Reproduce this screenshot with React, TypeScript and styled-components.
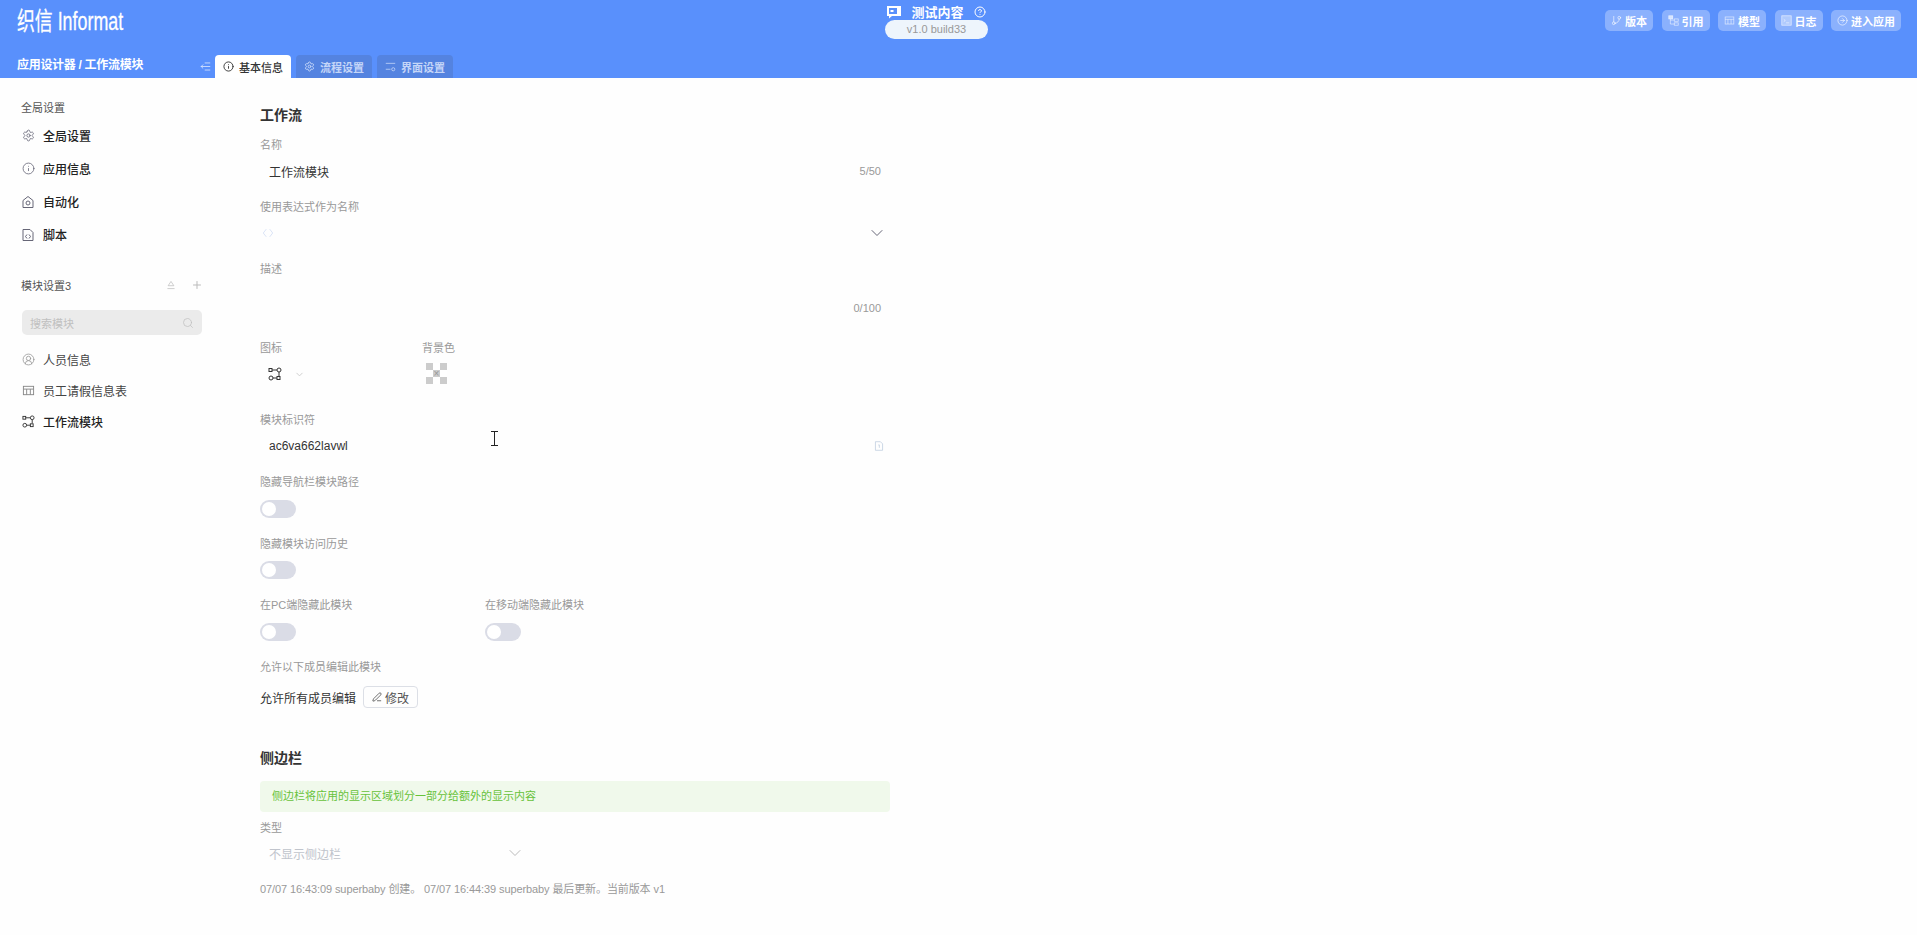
import React from 'react';
import styled, { createGlobalStyle } from 'styled-components';
import { ChevronDown, CircleArrowRight, CircleHelp, CircleUserRound, GitBranch, Info, PenLine, Plus, Search, Settings } from 'lucide-react';

const FONT = `"Liberation Sans", "Noto Sans CJK SC", sans-serif`;

const GlobalStyle = createGlobalStyle`
  html, body { margin: 0; padding: 0; height: 100%; }
  body { background: #fefefe; font-family: ${FONT}; overflow: hidden; }
  * { box-sizing: border-box; }
`;

const Page = styled.div`
  width: 1917px;
  height: 935px;
  display: flex;
  flex-direction: column;
`;

const Header = styled.header`
  height: 78px;
  flex: none;
  background: #5990fc;
  display: flex;
  flex-direction: column;
  position: relative;
`;

const TopRow = styled.div`
  height: 55px;
  display: flex;
  justify-content: space-between;
  padding: 10px 16px 0 17px;
`;

const Logo = styled.div`
  color: #fff;
  font-size: 25px;
  line-height: 22px;
  -webkit-text-stroke: 0.3px #fff;
  transform: scaleX(0.714);
  transform-origin: left center;
  white-space: nowrap;
`;

const Center = styled.div`
  position: absolute;
  left: 885px;
  top: 3px;
  width: 103px;
  display: flex;
  flex-direction: column;
  align-items: center;
`;

const TitleRow = styled.div`
  height: 17px;
  display: flex;
  align-items: center;
  gap: 10px;
  color: #fff;
  font-size: 13px;
  font-weight: 700;
  white-space: nowrap;
`;

const Version = styled.div`
  width: 103px;
  height: 19px;
  border-radius: 10px;
  background: #eef5fc;
  color: #999;
  font-size: 11px;
  line-height: 19px;
  text-align: center;
`;

const Actions = styled.div`
  display: flex;
  gap: 8.5px;
`;

const ActionButton = styled.div`
  height: 21px;
  padding: 0 6px;
  border-radius: 5px;
  background: rgba(255, 255, 255, 0.3);
  color: #fff;
  font-size: 11px;
  font-weight: 700;
  display: flex;
  align-items: center;
  gap: 3px;
  white-space: nowrap;
  svg {
    color: rgba(255, 255, 255, 0.65);
  }
`;

const BottomRow = styled.div`
  height: 23px;
  display: flex;
  align-items: flex-end;
  padding-left: 17px;
`;

const Crumb = styled.div`
  width: 183px;
  height: 23px;
  color: #fff;
  font-size: 12px;
  font-weight: 700;
  line-height: 20px;
  letter-spacing: -0.3px;
  white-space: nowrap;
`;

const Collapse = styled.div`
  width: 15px;
  height: 23px;
  display: flex;
  align-items: center;
  color: #dfe9fe;
`;

const Tabs = styled.div`
  display: flex;
  gap: 5px;
`;

const Tab = styled.div<{ $active?: boolean }>`
  width: 76px;
  height: 23px;
  border-radius: 4px 4px 0 0;
  background: ${({ $active }) => ($active ? '#fff' : '#5483e0')};
  color: ${({ $active }) => ($active ? '#333' : '#c5d6f8')};
  font-size: 11px;
  font-weight: ${({ $active }) => ($active ? 500 : 700)};
  display: flex;
  align-items: center;
  justify-content: center;
  gap: 5px;
  white-space: nowrap;
`;

const Body = styled.div`
  flex: 1;
  display: flex;
  min-height: 0;
`;

const Sidebar = styled.aside`
  width: 260px;
  flex: none;
  padding: 23px 0 0 21px;
`;

const SideTitle = styled.div`
  height: 14px;
  color: #555;
  font-size: 11px;
  line-height: 14px;
  margin-bottom: 4px;
`;

const SideItem = styled.div<{ $height: number; $strong?: boolean }>`
  height: ${({ $height }) => $height}px;
  display: flex;
  align-items: center;
  gap: 8px;
  color: ${({ $strong }) => ($strong ? '#222' : '#444')};
  font-size: 12px;
  font-weight: ${({ $strong }) => ($strong ? 500 : 400)};
  white-space: nowrap;
`;

const IconSlot = styled.span<{ $color?: string }>`
  width: 14px;
  display: flex;
  justify-content: center;
  color: ${({ $color }) => $color || '#667'};
`;

const ModuleHead = styled.div`
  margin-top: 26px;
  width: 182px;
  height: 16px;
  display: flex;
  align-items: center;
  justify-content: space-between;
  color: #555;
  font-size: 11px;
`;

const HeadIcons = styled.div`
  display: flex;
  align-items: center;
  gap: 15px;
  color: #bbb;
`;

const SearchBox = styled.div`
  margin: 17px 0 9px 1px;
  width: 180px;
  height: 25px;
  border-radius: 5px;
  background: #ebebeb;
  padding: 0 8px;
  display: flex;
  align-items: center;
  justify-content: space-between;
  color: #c0c0c0;
  font-size: 11px;
`;

const Main = styled.main`
  width: 630px;
  padding-top: 29px;
`;

const SectionTitle = styled.h2<{ $top?: number }>`
  margin: ${({ $top }) => $top || 0}px 0 0;
  height: 16px;
  color: #333;
  font-size: 14px;
  line-height: 16px;
  font-weight: 700;
`;

const Label = styled.div<{ $top: number }>`
  margin-top: ${({ $top }) => $top}px;
  height: 14px;
  color: #999;
  font-size: 11px;
  line-height: 14px;
  white-space: nowrap;
`;

const InputRow = styled.div<{ $height?: number; $left?: number; $right?: number }>`
  height: ${({ $height }) => $height || 26}px;
  margin-top: 6px;
  padding: 0 ${({ $right }) => $right ?? 9}px 0 ${({ $left }) => $left ?? 9}px;
  display: flex;
  align-items: center;
  justify-content: space-between;
  color: #333;
  font-size: 12px;
`;

const Counter = styled.span`
  color: #999;
  font-size: 11px;
`;

const CopyButton = styled.span`
  display: flex;
  color: #b8c8dc;
`;

const ExpressionMark = styled.span`
  display: flex;
  color: #d5dff5;
`;

const Columns = styled.div`
  display: flex;
`;

const Column = styled.div<{ $width: number }>`
  width: ${({ $width }) => $width}px;
`;

const IconPick = styled.div`
  height: 22px;
  margin-top: 8px;
  padding-left: 8px;
  display: flex;
  align-items: center;
  gap: 12px;
  color: #333;
`;

const Checker = styled.div`
  margin: 8px 0 0 4px;
  width: 21px;
  height: 21px;
  position: relative;
  background: conic-gradient(#fff 25%, #ccc 0 50%, #fff 0 75%, #ccc 0) 0 0 / 14px 14px;
  &::after {
    content: '×';
    position: absolute;
    inset: 0;
    color: #999;
    font-size: 10px;
    line-height: 21px;
    text-align: center;
  }
`;

const Toggle = styled.div<{ $top: number }>`
  margin-top: ${({ $top }) => $top}px;
  width: 36px;
  height: 18px;
  border-radius: 9px;
  background: #dadce6;
  padding: 2px;
  &::after {
    content: '';
    display: block;
    width: 14px;
    height: 14px;
    border-radius: 50%;
    background: #fff;
  }
`;

const MemberRow = styled.div`
  margin-top: 12px;
  display: flex;
  align-items: center;
  gap: 7px;
  color: #333;
  font-size: 12px;
`;

const EditButton = styled.div`
  width: 55px;
  height: 22px;
  border: 1px solid #dcdfe6;
  border-radius: 4px;
  display: flex;
  align-items: center;
  justify-content: center;
  gap: 3px;
  color: #555;
  font-size: 12px;
`;

const Alert = styled.div`
  margin-top: 15px;
  height: 31px;
  border-radius: 4px;
  background: #f0f9eb;
  color: #67c23a;
  font-size: 11px;
  line-height: 31px;
  padding-left: 12px;
`;

const SelectRow = styled(InputRow)`
  width: 265px;
  margin-top: 5px;
  color: #c0c4cc;
`;

const Footer = styled.div`
  margin-top: 16px;
  color: #999;
  font-size: 11px;
  line-height: 14px;
  letter-spacing: -0.1px;
  white-space: nowrap;
`;

const TextCursor = styled.div`
  position: absolute;
  left: 491px;
  top: 431px;
  width: 7px;
  height: 15px;
  border-top: 1px solid #222;
  border-bottom: 1px solid #222;
  &::after {
    content: '';
    display: block;
    width: 1px;
    height: 13px;
    margin: 0 auto;
    background: #222;
  }
`;

const Glyph = styled.svg`
  flex: none;
  fill: none;
  stroke: currentColor;
  stroke-width: 1;
`;

const Icon: React.FC<{ size?: number; children: React.ReactNode }> = ({ size = 14, children }) => (
  <Glyph width={size} height={size} viewBox="0 0 14 14">
    {children}
  </Glyph>
);

const FlowIcon: React.FC<{ size?: number }> = ({ size }) => (
  <Icon size={size}>
    <rect x="1" y="1.5" width="3" height="3" />
    <path d="M4 3h5M11 5v4M5 11h4" />
    <circle cx="11" cy="3" r="2" />
    <circle cx="3" cy="11" r="2" />
    <rect x="9" y="9.5" width="3" height="3" />
  </Icon>
);

const TableIcon: React.FC<{ size?: number }> = ({ size }) => (
  <Icon size={size}>
    <rect x="1.5" y="2.5" width="11" height="9" />
    <path d="M1.5 5.5h11M5 5.5v6M9 5.5v6" />
  </Icon>
);

const AutomationIcon = () => (
  <Icon>
    <path d="M2 12.5V5.5L7 1.5l5 4v7z" />
    <circle cx="7" cy="8" r="2" />
  </Icon>
);

const ScriptIcon = () => (
  <Icon>
    <path d="M2 1.5h7l3 3v8H2z" />
    <path d="M6 6.5L4.5 8.5 6 10.5M8 6.5l1.5 2-1.5 2" />
  </Icon>
);

const MessageIcon = () => (
  <Glyph width={14} height={14} viewBox="0 0 14 14">
    <path d="M0 1h14v10H5l-3 2.500V11H0z" fill="#fff" stroke="none" />
    <path d="M2 3h10v6H2z" fill="#5990fc" stroke="none" />
    <path d="M3.500 5h3v2h-3z" fill="#fff" stroke="none" />
    <path d="M10 3h2v6h-2z" fill="#fff" stroke="none" />
  </Glyph>
);

const RefIcon = () => (
  <Icon size={11}>
    <rect x="1" y="1" width="5" height="4" fill="currentColor" />
    <rect x="8" y="5" width="5" height="3" />
    <rect x="8" y="10" width="5" height="3" />
    <path d="M3 5v6.500h5M3 6.500h5" />
  </Icon>
);

const LogIcon = () => (
  <Icon size={11}>
    <rect x="1" y="1" width="12" height="12" fill="currentColor" fillOpacity="0.5" />
    <path d="M3.500 8.500l2-1.500-2-1.500M6.500 10h4" />
  </Icon>
);

const CollapseIcon = () => (
  <Icon size={11}>
    <path d="M6 2.500h7M1 7h12M6 11.500h7M4 4.500L1.500 7 4 9.500" />
  </Icon>
);

const LayoutTabIcon = () => (
  <Icon size={11}>
    <path d="M1 3h12M1 10.500h6" />
    <circle cx="10.500" cy="10.500" r="2" />
  </Icon>
);

const CollapseAllIcon = () => (
  <Icon size={10}>
    <path d="M7 2l4 6H3zM2 12h10" />
  </Icon>
);

const DocIcon = () => (
  <Icon size={10}>
    <path d="M2 1h7l3 3v9H2z" />
    <path d="M6 5.500h1.500v4" />
  </Icon>
);

const AngleIcon = () => (
  <Icon size={12}>
    <path d="M5 2.500L1.500 7 5 11.500M9 2.500L12.500 7 9 11.500" />
  </Icon>
);

const actions = [
  { label: '版本', icon: <GitBranch size={11} /> },
  { label: '引用', icon: <RefIcon /> },
  { label: '模型', icon: <TableIcon size={11} /> },
  { label: '日志', icon: <LogIcon /> },
  { label: '进入应用', icon: <CircleArrowRight size={11} /> },
];

const App: React.FC = () => {
  return (
    <Page>
      <GlobalStyle />
      <Header>
        <TopRow>
          <Logo>织信 Informat</Logo>
          <Actions>
            {actions.map((action) => (
              <ActionButton key={action.label}>
                {action.icon}
                {action.label}
              </ActionButton>
            ))}
          </Actions>
        </TopRow>
        <Center>
          <TitleRow>
            <MessageIcon />
            测试内容
            <CircleHelp size={12} />
          </TitleRow>
          <Version>v1.0 build33</Version>
        </Center>
        <BottomRow>
          <Crumb>应用设计器 / 工作流模块</Crumb>
          <Collapse>
            <CollapseIcon />
          </Collapse>
          <Tabs>
            <Tab $active>
              <Info size={11} />
              基本信息
            </Tab>
            <Tab>
              <Settings size={11} />
              流程设置
            </Tab>
            <Tab>
              <LayoutTabIcon />
              界面设置
            </Tab>
          </Tabs>
        </BottomRow>
      </Header>
      <Body>
        <Sidebar>
          <SideTitle>全局设置</SideTitle>
          <SideItem $height={33} $strong>
            <IconSlot><Settings size={13} strokeWidth={1.5} /></IconSlot>全局设置
          </SideItem>
          <SideItem $height={33} $strong>
            <IconSlot><Info size={13} strokeWidth={1.5} /></IconSlot>应用信息
          </SideItem>
          <SideItem $height={33} $strong>
            <IconSlot><AutomationIcon /></IconSlot>自动化
          </SideItem>
          <SideItem $height={33} $strong>
            <IconSlot><ScriptIcon /></IconSlot>脚本
          </SideItem>
          <ModuleHead>
            模块设置3
            <HeadIcons>
              <CollapseAllIcon />
              <Plus size={12} />
            </HeadIcons>
          </ModuleHead>
          <SearchBox>
            搜索模块
            <Search size={12} strokeWidth={1.5} />
          </SearchBox>
          <SideItem $height={31}>
            <IconSlot $color="#999"><CircleUserRound size={13} strokeWidth={1.5} /></IconSlot>人员信息
          </SideItem>
          <SideItem $height={31}>
            <IconSlot $color="#888"><TableIcon size={13} /></IconSlot>员工请假信息表
          </SideItem>
          <SideItem $height={31} $strong>
            <IconSlot $color="#333"><FlowIcon size={13} /></IconSlot>工作流模块
          </SideItem>
        </Sidebar>
        <Main>
          <SectionTitle>工作流</SectionTitle>
          <Label $top={15}>名称</Label>
          <InputRow>
            工作流模块
            <Counter>5/50</Counter>
          </InputRow>
          <Label $top={16}>使用表达式作为名称</Label>
          <InputRow $left={2} $right={3}>
            <ExpressionMark>
              <AngleIcon />
            </ExpressionMark>
            <ChevronDown size={20} strokeWidth={1.2} color="#667" />
          </InputRow>
          <Label $top={16}>描述</Label>
          <InputRow $height={52}>
            <span />
            <Counter>0/100</Counter>
          </InputRow>
          <Columns>
            <Column $width={162}>
              <Label $top={7}>图标</Label>
              <IconPick>
                <FlowIcon />
                <ChevronDown size={11} color="#ccc" />
              </IconPick>
            </Column>
            <Column $width={200}>
              <Label $top={7}>背景色</Label>
              <Checker />
            </Column>
          </Columns>
          <Label $top={28}>模块标识符</Label>
          <InputRow $right={6}>
            ac6va662lavwl
            <CopyButton>
              <DocIcon />
            </CopyButton>
          </InputRow>
          <Label $top={16}>隐藏导航栏模块路径</Label>
          <Toggle $top={11} />
          <Label $top={19}>隐藏模块访问历史</Label>
          <Toggle $top={10} />
          <Columns>
            <Column $width={225}>
              <Label $top={19}>在PC端隐藏此模块</Label>
              <Toggle $top={11} />
            </Column>
            <Column $width={200}>
              <Label $top={19}>在移动端隐藏此模块</Label>
              <Toggle $top={11} />
            </Column>
          </Columns>
          <Label $top={19}>允许以下成员编辑此模块</Label>
          <MemberRow>
            允许所有成员编辑
            <EditButton>
              <PenLine size={10} />
              修改
            </EditButton>
          </MemberRow>
          <SectionTitle $top={42}>侧边栏</SectionTitle>
          <Alert>侧边栏将应用的显示区域划分一部分给额外的显示内容</Alert>
          <Label $top={9}>类型</Label>
          <SelectRow $right={0}>
            不显示侧边栏
            <ChevronDown size={20} strokeWidth={1.2} color="#bbb" />
          </SelectRow>
          <Footer>07/07 16:43:09 superbaby 创建。 07/07 16:44:39 superbaby 最后更新。当前版本 v1</Footer>
        </Main>
      </Body>
      <TextCursor />
    </Page>
  );
};

export default App;
